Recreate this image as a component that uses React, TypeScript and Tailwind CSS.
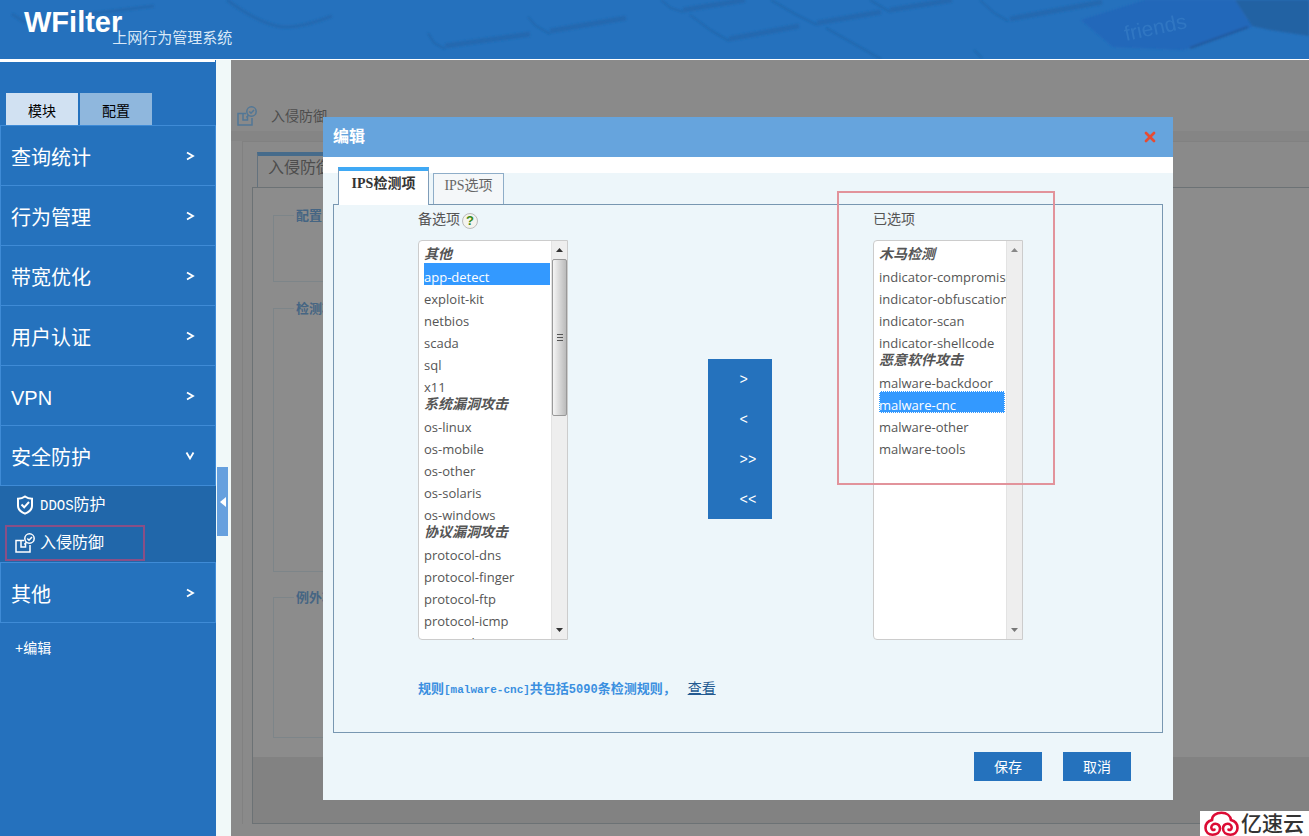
import { useState } from 'react';
import { X } from 'lucide-react';

type Group = { label: string; items: string[] };

const menus = ['查询统计', '行为管理', '带宽优化', '用户认证', 'VPN'];

const available: Group[] = [
  { label: '其他', items: ['app-detect', 'exploit-kit', 'netbios', 'scada', 'sql', 'x11'] },
  { label: '系统漏洞攻击', items: ['os-linux', 'os-mobile', 'os-other', 'os-solaris', 'os-windows'] },
  {
    label: '协议漏洞攻击',
    items: ['protocol-dns', 'protocol-finger', 'protocol-ftp', 'protocol-icmp', 'protocol-imap'],
  },
];

const chosen: Group[] = [
  {
    label: '木马检测',
    items: ['indicator-compromise', 'indicator-obfuscation', 'indicator-scan', 'indicator-shellcode'],
  },
  {
    label: '恶意软件攻击',
    items: ['malware-backdoor', 'malware-cnc', 'malware-other', 'malware-tools'],
  },
];

function IntrusionIcon({ className }: { className?: string }) {
  return (
    <svg viewBox="0 0 20 20" fill="none" stroke="currentColor" strokeWidth="1.5" className={className}>
      <path d="M9 7.500H1V19h14v-7" />
      <path d="M6 7.500V14h4.500v-4" />
      <circle cx="14.500" cy="5.500" r="4.700" />
      <path d="M12.300 5.500l1.700 1.700 3-3.200M11.500 9l-2 2.500" />
    </svg>
  );
}

function ShieldIcon() {
  return (
    <svg viewBox="0 0 18 20" fill="none" stroke="currentColor" strokeWidth="2" className="h-5 w-[18px]">
      <path d="M9 1.500C7 3 4.500 3.700 2 3.700V11c0 3.500 3 6 7 7.700 4-1.700 7-4.200 7-7.700V3.700c-2.500 0-5-.7-7-2.200z" />
      <path d="M5.500 9.500l2.700 2.800L13 7" />
    </svg>
  );
}

function KeyboardArt() {
  return (
    <svg width="1309" height="59" viewBox="0 0 1309 59" fill="none" className="absolute left-0 top-0" aria-hidden="true">
      <defs>
        <filter id="soft" x="-5%" y="-20%" width="110%" height="140%">
          <feGaussianBlur stdDeviation="1.200" />
        </filter>
      </defs>
      <g filter="url(#soft)">
        <g stroke="#2366aa" strokeWidth="5" strokeLinejoin="round" opacity="0.7">
          <path d="M12 14l12 8 130-16" strokeWidth="3" />
          <path d="M227 0q30 22 50 26t55-10" strokeWidth="3" />
          <path d="M445 46l85-12" />
          <path d="M550 31l76-13" />
          <path d="M683 10l62-10" />
          <path d="M729 39l70-13" />
          <path d="M817 23l64-11" />
          <path d="M890 10l62-10" />
          <path d="M1010 19l92-17" />
        </g>
        <g stroke="#2060a2" strokeWidth="1.500" opacity="0.7">
          <path d="M428 33l6 10 11 6" />
          <path d="M528 17l8 9 14 8" />
          <path d="M661 0l10 8 12 4" />
          <path d="M690 15l22 16 17 10" />
          <path d="M771 0l24 14 22 11" />
          <path d="M870 0l20 12" />
          <path d="M826 28l55 31" />
          <path d="M980 0l14 13 14 8" />
          <path d="M974 50l8 8" />
        </g>
        <path d="M1235 0h74v36l-39-6-18-4z" fill="#2462a3" />
        <path d="M1081 20l64-20h90l17 27-69 23-70-3z" fill="#2367ba" />
        <path d="M1190 48l58-21" stroke="#20599b" strokeWidth="2" />
      </g>
      <text
        x="1126"
        y="41"
        fontSize="21"
        fontFamily="Liberation Sans"
        fill="#3a80c8"
        opacity="0.6"
        transform="rotate(-12 1126 41)"
      >
        friends
      </text>
    </svg>
  );
}

function MenuItem({ name, open = false }: { name: string; open?: boolean }) {
  return (
    <button
      type="button"
      className="flex h-[60px] w-full items-center justify-between border-x border-t border-[#3f8bd6] bg-[#2572bd] pl-[10px] pr-5 pt-1 text-left text-xl text-white"
    >
      {name}
      <svg width="10" height="10" viewBox="0 0 10 10" fill="none" stroke="currentColor" strokeWidth="1.800" className="mb-1">
        {open ? <path d="M1.500 1.500L5 7.500l3.500-6" /> : <path d="M2 1.500L8 5l-6 3.500" />}
      </svg>
    </button>
  );
}

function Sidebar() {
  return (
    <nav className="w-[216px] shrink-0 bg-[#2571bd] text-white">
      <div className="mr-px h-0.5 bg-white" />
      <div className="flex gap-0.5 px-1.5 pt-[31px] text-sm text-black">
        <button type="button" className="h-8 w-[72px] bg-[#d1e1f2] pt-1">模块</button>
        <button type="button" className="h-8 w-[72px] bg-[#8fb7dd] pt-1">配置</button>
      </div>
      {menus.map((m) => (
        <MenuItem key={m} name={m} />
      ))}
      <MenuItem name="安全防护" open />
      <div className="flex h-[77px] flex-col border-t border-[#3f8bd6] bg-[#2167aa] text-base">
        <a href="#ddos" className="flex h-[38px] items-center gap-1.5 pl-4">
          <ShieldIcon />
          <span><span className="font-['Liberation_Mono'] text-sm">DDOS</span>防护</span>
        </a>
        <a href="#ips" className="relative flex h-[38px] items-center gap-[5px] pl-[15px]">
          <IntrusionIcon className="size-5" />
          入侵防御
          <span className="absolute left-[5px] top-px h-[36px] w-[140px] border-2 border-[#8a4f86]" />
        </a>
      </div>
      <div className="border-b border-[#3f8bd6]">
        <MenuItem name="其他" />
      </div>
      <a href="#edit" className="block px-[15px] py-[15px] text-sm">+编辑</a>
    </nav>
  );
}

function Backdrop() {
  return (
    <div className="flex grow flex-col bg-[#8a8a8a] pt-[41px] text-[#4d4d4d]">
      <div className="flex h-[30px] items-center gap-3.5 pl-1.5 text-sm">
        <IntrusionIcon className="size-5 text-[#527796]" />
        <span>入侵防御</span>
      </div>
      <div className="h-2.5 bg-[#858585]" />
      <div className="ml-[11px] flex grow flex-col border-l border-t border-[#818181] pl-[9px]">
        <div className="mt-2.5 flex h-[35px] pl-[5px]">
          <div className="w-24 border-l border-t-4 border-l-[#64727e] border-t-[#466b8b] pl-2.5 text-base">入侵防御</div>
        </div>
        <div className="grow border-l border-t border-[#6c7275] bg-[#8c8c8c] pl-5 pt-[18px] text-[13px] font-bold text-[#456583]">
          <fieldset className="h-[76px] w-4/5 border border-[#7d8589] pl-5">
            <legend className="px-0.5">配置</legend>
          </fieldset>
          <fieldset className="mt-[17px] h-[273px] w-4/5 border border-[#7d8589] pl-5">
            <legend className="px-0.5">检测项</legend>
          </fieldset>
          <fieldset className="mt-4 h-[150px] w-4/5 border border-[#7d8589] pl-5">
            <legend className="px-0.5">例外项</legend>
          </fieldset>
        </div>
        <div className="h-[67px] border-b border-l border-[#6c7275] bg-[#828282]" />
      </div>
      <div className="h-3" />
    </div>
  );
}

function Scrollbar({ thumb = false }: { thumb?: boolean }) {
  return (
    <div className="flex w-4 shrink-0 flex-col items-center justify-between border-l border-[#e3e3e3] bg-[#eee]" aria-hidden="true">
      <div className="flex w-full flex-col items-center">
        <span className="flex h-[18px] items-center">
          <svg width="7" height="4" viewBox="0 0 7 4"><path d="M0 4l3.500-4L7 4z" fill={thumb ? '#333' : '#888'} /></svg>
        </span>
        {thumb && (
          <span className="flex h-[157px] w-full flex-col items-center justify-center gap-0.5 rounded-xs border border-[#999] bg-linear-to-r from-[#f5f5f5] to-[#bbb]">
            <i className="h-px w-1.5 bg-[#555]" />
            <i className="h-px w-1.5 bg-[#555]" />
            <i className="h-px w-1.5 bg-[#555]" />
          </span>
        )}
      </div>
      <span className="flex h-[18px] items-center">
        <svg width="7" height="4" viewBox="0 0 7 4"><path d="M0 0l3.500 4L7 0z" fill={thumb ? '#333' : '#777'} /></svg>
      </span>
    </div>
  );
}

type PickListProps = {
  id: string;
  groups: Group[];
  value: string[];
  onChange: (value: string[]) => void;
  thumb?: boolean;
  current?: string;
};

function PickList({ id, groups, value, onChange, thumb, current }: PickListProps) {
  return (
    <div className="flex h-[400px] w-[150px] overflow-hidden rounded-l border border-[#ccc] bg-white">
      <select
        id={id}
        multiple
        value={value}
        onChange={(e) => onChange(Array.from(e.target.selectedOptions, (o) => o.value))}
        className="h-full min-w-0 grow overflow-x-hidden py-1 pl-[3px] pr-px font-['Open_Sans','Noto_Sans_CJK_SC',sans-serif] text-sm text-[#555] outline-none [scrollbar-width:none]"
      >
        {groups.map((g) => (
          <optgroup key={g.label} label={g.label} className="-mt-0.5 text-sm font-bold italic">
            {g.items.map((item) => (
              <option
                key={item}
                value={item}
                data-current={item === current || undefined}
                className="ml-0.5 h-[22px] min-h-0 p-0 pt-[5px] text-[13px] font-normal not-italic -outline-offset-1 outline-white before:content-none first:-mt-px checked:bg-linear-to-r checked:from-[#3399ff] checked:to-[#3399ff] checked:[-webkit-text-fill-color:white] data-current:outline-1 data-current:outline-dotted"
              >
                {item}
              </option>
            ))}
          </optgroup>
        ))}
      </select>
      <Scrollbar thumb={thumb} />
    </div>
  );
}

function EditDialog() {
  const [left, setLeft] = useState(['app-detect']);
  const [right, setRight] = useState(['malware-cnc']);

  return (
    <section role="dialog" aria-label="编辑" className="absolute left-[92px] right-[136px] top-[57px] bg-[#edf6fa]">
      <header className="flex h-10 items-center justify-between bg-[#66a4dd] pl-2.5 pr-[15px] text-white">
        <h2 className="text-base font-bold">编辑</h2>
        <button type="button" aria-label="关闭" className="text-[#e64b33]">
          <X size={16} strokeWidth={4} />
        </button>
      </header>
      <div className="h-4 bg-white" />

      <div className="px-2.5">
        <div className="relative -mt-1.5 flex items-end gap-1 pl-[5px] font-['Liberation_Serif','Noto_Sans_CJK_SC',serif] text-sm">
          <button type="button" className="relative -mb-px h-[38px] w-[91px] border-x border-t-4 border-x-[#7f9db9] border-t-[#3fa9f5] bg-white pb-2 font-bold text-[#333]">
            IPS检测项
          </button>
          <button type="button" className="h-[31px] w-[71px] border-x border-t border-[#8eadc8] bg-[#f4f7f9] pb-1.5 text-[#666]">
            IPS选项
          </button>
        </div>

        <div className="border border-[#7897b1] pb-[31px] pl-[84px] pr-[139px] pt-1">
          <div className="grid grid-cols-[150px_1fr_150px] text-sm text-[#555]">
            <div>
              <div className="flex h-[31px] items-start gap-0.5">
                <label htmlFor="available">备选项</label>
                <span className="mt-1 flex size-4 items-center justify-center rounded-full border border-[#bbb] bg-[#f4f4ee] font-['Liberation_Sans'] text-[13px] font-bold text-[#3b8a12]">
                  ?
                </span>
              </div>
              <PickList id="available" groups={available} value={left} onChange={setLeft} thumb />
            </div>
            <div className="flex items-start justify-center pl-[38px] pt-[150px]">
              <div className="flex w-16 flex-col bg-[#2572bd] font-['Liberation_Mono'] text-sm text-white">
                <button type="button" className="h-10 pl-8 pt-0.5 text-left">&gt;</button>
                <button type="button" className="h-10 pl-8 pt-0.5 text-left">&lt;</button>
                <button type="button" className="h-10 pl-8 pt-0.5 text-left">&gt;&gt;</button>
                <button type="button" className="h-10 pl-8 pt-0.5 text-left">&lt;&lt;</button>
              </div>
            </div>
            <div className="relative">
              <label htmlFor="chosen" className="block h-[31px]">已选项</label>
              <PickList id="chosen" groups={chosen} value={right} onChange={setRight} current="malware-cnc" />
              <span className="pointer-events-none absolute -left-9 -top-[18px] h-[294px] w-[218px] border-2 border-[#e2939b]" />
            </div>
          </div>
          <p className="mt-[37px] flex items-baseline gap-3 text-[13px]/[22px] font-bold text-[#3a8fe0]">
            <span>
              规则<span className="font-['Liberation_Mono'] text-[11px]">[malware-cnc]</span>共包括
              <span className="font-['Liberation_Mono'] text-xs">5090</span>条检测规则，
            </span>
            <a href="#rules" className="text-sm/[22px] font-normal text-[#235a91] underline">查看</a>
          </p>
        </div>
      </div>

      <footer className="flex justify-end gap-[21px] pb-[19px] pr-[42px] pt-[19px] text-sm text-white">
        <button type="button" className="h-[29px] w-[68px] bg-[#2572bd]">保存</button>
        <button type="button" className="h-[29px] w-[68px] bg-[#2572bd]">取消</button>
      </footer>
    </section>
  );
}

export default function App() {
  return (
    <div className="relative flex min-h-screen flex-col overflow-hidden bg-[#2571bd] font-['Liberation_Sans','Noto_Sans_CJK_SC',sans-serif]">
      <header className="relative flex h-[60px] items-start overflow-hidden border-b border-white bg-[#2571bd] pl-6 text-white">
        <KeyboardArt />
        <h1 className="relative pt-1 text-[29px]/[36px] font-bold">WFilter</h1>
        <span className="relative -ml-2.5 pt-[26px] text-[15px]/[24px] text-[#d9e8f7]">上网行为管理系统</span>
      </header>

      <div className="flex grow">
        <Sidebar />
        <div className="w-[15px] shrink-0 bg-[#f1f9f9] pl-px pt-[407px]">
          <button type="button" aria-label="收起" className="flex h-[69px] w-[11px] items-center justify-center bg-[#66a0de]">
            <svg width="6" height="10" viewBox="0 0 6 10" fill="#fff"><path d="M6 0v10L0 5z" /></svg>
          </button>
        </div>
        <main className="relative flex min-w-0 grow flex-col">
          <Backdrop />
          <EditDialog />
        </main>
      </div>

      <div className="absolute bottom-0 right-0 flex h-[25px] w-[109px] items-center gap-0.5 overflow-hidden bg-white pl-1">
        <svg width="35" height="25" viewBox="0 0 35 25" fill="none" stroke="#dc0c35" strokeWidth="2.600" strokeLinecap="round" className="shrink-0">
          <path d="M8 9C8 4.500 12 1.800 17.500 1.800S26.500 5 27 9" />
          <path d="M8 9C4 10 1.500 13 1.500 17c0 4.500 3.500 6.700 7 6.700 4.500 0 7.500-2.700 7.500-6.200 0-3-2.200-4.800-4.500-4.800S7.300 14.500 7.300 16.500s1.500 2.700 3.200 2.200" />
          <path d="M27 9c4 1 6.500 4 6.500 8 0 4.500-3.500 6.700-7 6.700-4.500 0-7.500-2.700-7.500-6.200 0-3 2.200-4.800 4.500-4.800s4.200 1.800 4.200 3.800-1.500 2.700-3.200 2.200" />
        </svg>
        <span className="whitespace-nowrap text-[21px]/[25px] font-medium text-[#333]">亿速云</span>
      </div>
    </div>
  );
}
